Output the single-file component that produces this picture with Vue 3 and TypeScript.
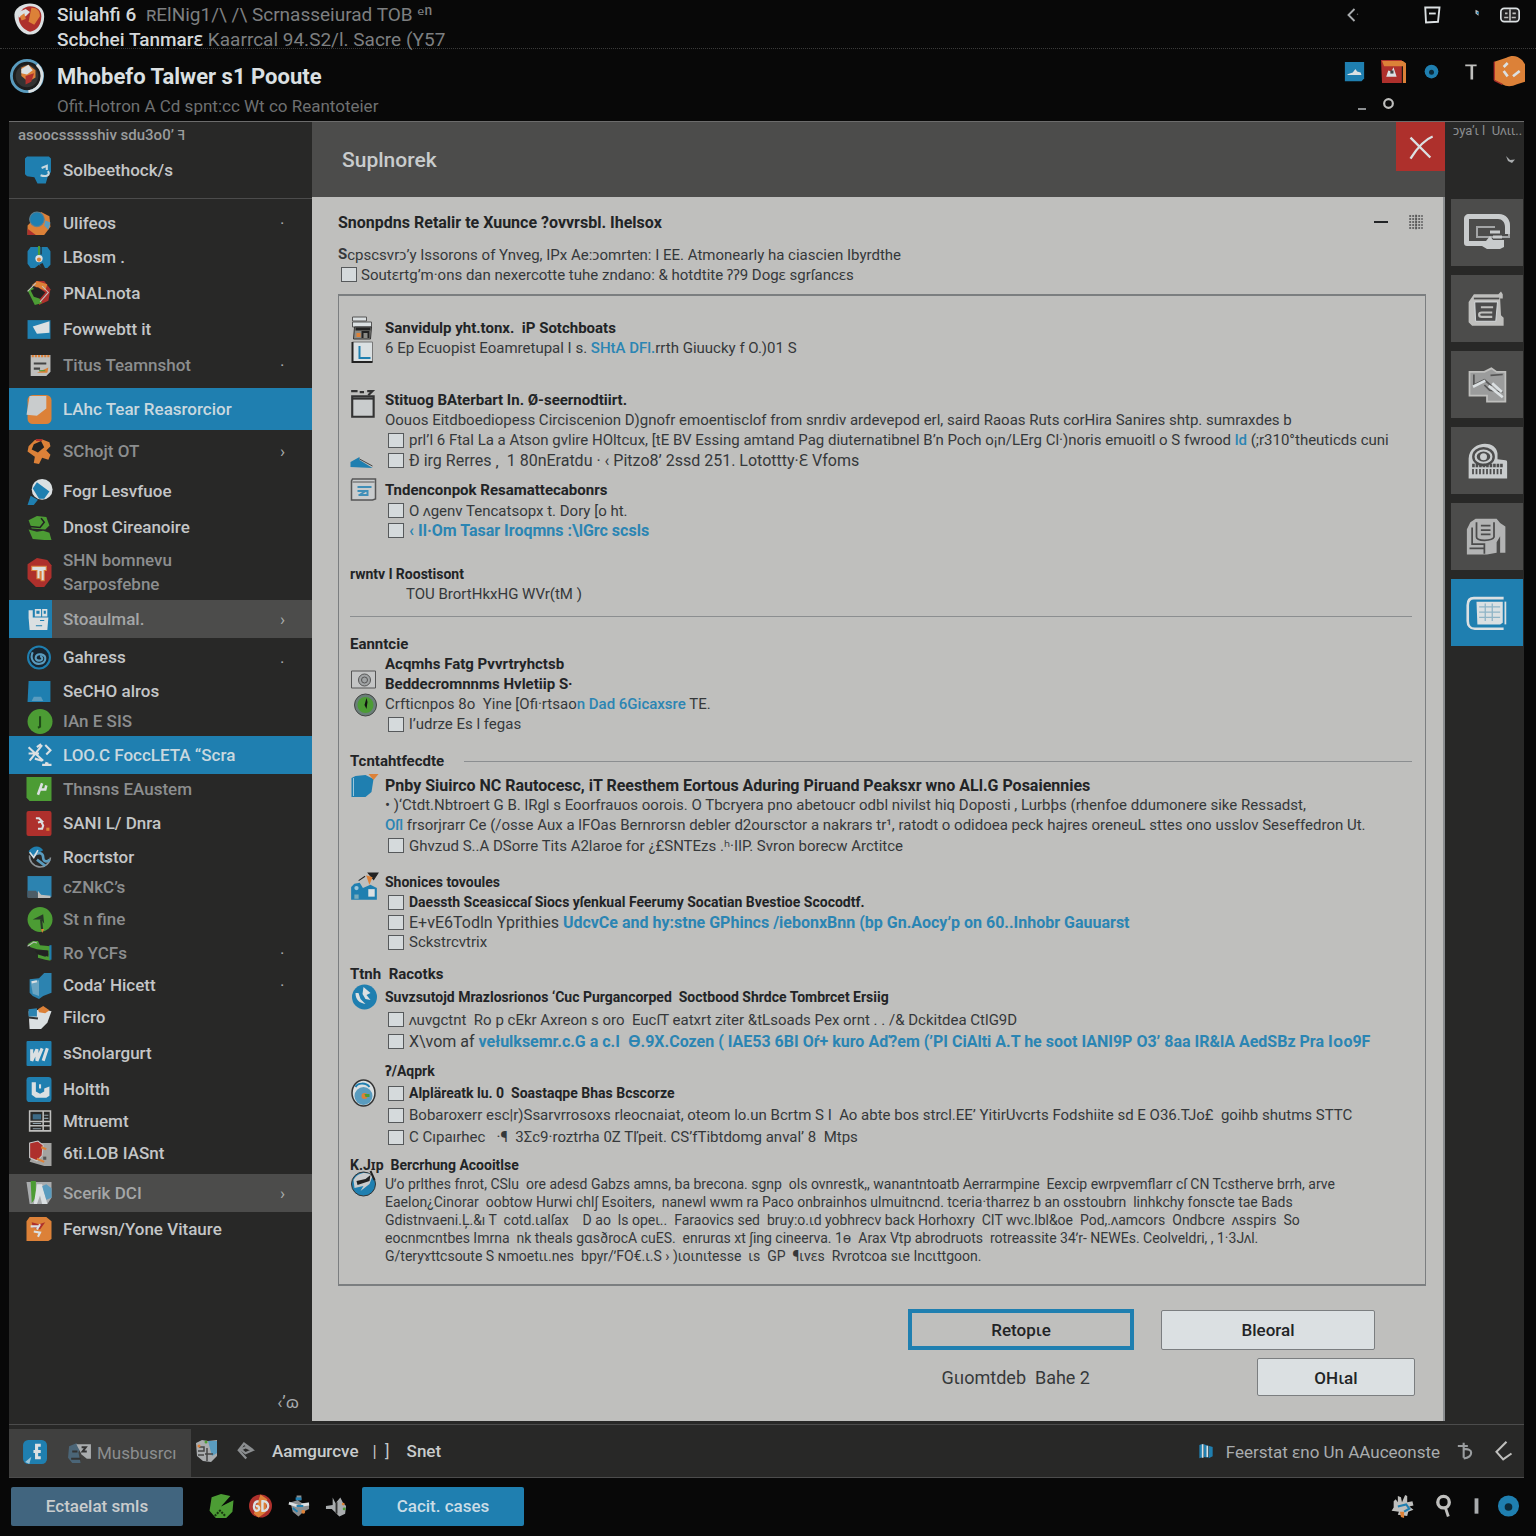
<script setup lang="ts">
import { ref } from 'vue'

type Seg = { t: string; link?: boolean }
type Line = {
  segs: Seg[]
  bold?: boolean
  icon?: string
  low?: boolean
  box?: boolean
  full?: boolean
  small?: boolean
  large?: boolean
  deep?: boolean
  rule?: boolean
}
type Block = { cls: string; lines: Line[] }
type NavItem = {
  label: string
  sub?: string
  icon: string
  h: 'xs' | 'sm' | 'md' | 'lg' | 'xl'
  state?: 'active' | 'hover' | 'tab'
  dim?: boolean
  mark?: string
}

const line = (t: string, o: Partial<Line> = {}): Line => ({ segs: [{ t }], ...o })
const a = (t: string): Seg => ({ t, link: true })
const s = (t: string): Seg => ({ t })

const icons: Record<string, string> = {
  shield: '<path d="M12 1c5 0 10 3 10 9 0 7-4 13-10 13S1 16 1 9c0-5 6-8 11-8z" fill="#dbe0e2"/><path d="M12 3c5 0 8 3 8 7 0 6-3 10-8 11-4-1-8-5-8-10 0-4 4-8 8-8z" fill="#ae302c"/><path d="M13 4c4 0 6 2 6 6l-4 6-4-2 1-5z" fill="#dc8138"/><path d="M4 7l5-2 3 2-3 3-5 1z" fill="#dbe0e2"/><path d="M5 10l3-2 1 4-3 1z" fill="#dc8138"/>',
  orb: '<circle cx="12" cy="12" r="11" fill="#1d1d1d" stroke="#5a9cbf" stroke-width="2"/><path d="M19 4a11 11 0 0 1-6 19" fill="none" stroke="#dbe0e2" stroke-width="2"/><circle cx="12" cy="12" r="8" fill="#333"/><path d="M8 6l5-2 5 4 0 5-5 3-5-4z" fill="#dc8138"/><path d="M8 7l5-3 3 4-4 3-4-1z" fill="#dbe0e2"/><path d="M11 12l6-2-2 6-4 2z" fill="#ae302c"/>',
  back: '<path d="M14 4l-8 8 8 8" fill="none" stroke="#a9acae" stroke-width="2.5"/><circle cx="18" cy="11" r="1" fill="#666"/>',
  win: '<path d="M3 2h19l-2 19-16 1z" fill="none" stroke="#dbe0e2" stroke-width="2.5"/><path d="M8 10h9" stroke="#dbe0e2" stroke-width="2.5"/>',
  drop: '<path d="M10 5l4 2v6l-4-3z" fill="#bfbfbd"/><circle cx="13" cy="9" r="1.5" fill="#1f7fb0"/>',
  keys: '<rect x="1" y="4" width="22" height="16" rx="4" fill="#222" stroke="#dbe0e2" stroke-width="2"/><path d="M12 5v14M5 15h5M14 15h5M6 10h3M15 10h4" stroke="#bfbfbd" stroke-width="2"/>',
  cloudTile: '<path d="M1 1h22v19l-3 3H1z" fill="#1f7fb0"/><path d="M4 15l6-2 3-4 2 3 4 1 1 3H4z" fill="#dbe0e2"/>',
  redTile: '<path d="M0 1h20v22H1z" fill="#ae302c"/><path d="M1 2h20l3 2v19h-3V7H3z" fill="#dc8138"/><path d="M5 17l2-6 3 1 2-4 3 9z" fill="#dbe0e2"/><path d="M9 11h3v3H9z" fill="#444"/>',
  blueDot: '<circle cx="12" cy="12" r="11" fill="#1f7fb0"/><circle cx="12" cy="13" r="4" fill="#0b2a3a"/>',
  pin: '<path d="M6 4h13v2h-4v15h-3V6H6z" fill="#bfbfbd"/>',
  hex: '<path d="M1 5l9-3c4-2 8-2 12 2l2 3v13l-6 2c-4 2-8 2-11 0l-6-3z" fill="#dc8138"/><path d="M1 5v14M1 19l6 3" stroke="#ae302c"/><path d="M8 9l3-3M8 12l3 4M15 16l5-4" stroke="#dbe0e2" stroke-width="2"/>',
  ring: '<circle cx="12" cy="12" r="8" fill="none" stroke="#bfbfbd" stroke-width="4"/>',
  close: '<path d="M3 4l17 17M22 3c-8 3-14 11-19 19" fill="none" stroke="#dbe0e2" stroke-width="2"/>',
  tick: '<path d="M2 4l8 8 10-1-6 7-8-4z" fill="#a9acae"/>',
  sheet: '<path d="M2 0h21l2 2v13l-3 4-2 7-8 0-3-6-7-1-2-2V2z" fill="#1f7fb0"/><path d="M16 11l5-2 0 4M15 18c5 2 10 0 7-4" fill="none" stroke="#c9d8df" stroke-width="2"/>',
  fox: '<path d="M14 1l8 4 1 10-6 8H1v-9z" fill="#dc8138"/><circle cx="10" cy="8" r="7" fill="#1f7fb0" stroke="#5f7f90"/><path d="M18 9l5 2-2 7-4-4z" fill="#5a9cbf"/><path d="M1 17l8 6H1z" fill="#ae302c"/>',
  clover: '<path d="M4 2h16l3 4v13l-3 3h-5l-3-3-4 3H4l-3-4V6z" fill="#1f7fb0"/><path d="M12 1v9" stroke="#4c9c34" stroke-width="2"/><path d="M14 1v8" stroke="#222"/><circle cx="12" cy="13" r="3.500" fill="#dbe0e2"/><circle cx="12" cy="14" r="2" fill="#dc8138"/><path d="M14 18l3 6" stroke="#282828" stroke-width="3"/>',
  chrome: '<path d="M9 0h8l6 8-2 11-9 4z" fill="#ae302c"/><path d="M5 4l5-4 10 3-2 6z" fill="#dc8138"/><path d="M1 9l7 14 7-2L6 6z" fill="#4c9c34"/><path d="M4 9l7-3 7 5-5 6-6-2z" fill="#222"/><path d="M1 10l8-8M13 20l8-9-6-6" fill="none" stroke="#bfbfbd"/>',
  mail: '<path d="M1 3h22v18H1z" fill="#1f7fb0"/><path d="M6 9l16-5v11l-12 1z" fill="#dbe0e2"/>',
  notes: '<path d="M4 2h19v16l-4 4H4z" fill="#bfbfbd"/><path d="M5 3h17" stroke="#dc8138" stroke-width="2" stroke-dasharray="2 1"/><path d="M7 10h12M7 15h6" stroke="#444" stroke-width="2"/><path d="M10 19h10l1-5z" fill="#dc8138"/><path d="M12 17h6" stroke="#4c9c34"/>',
  orangeDoc: '<rect x="1" y="-2" width="23" height="28" rx="5" fill="#dc8138"/><path d="M3 -1h16v12l-9 7-10-1z" fill="#c9cccd"/>',
  splash: '<path d="M2 7l6-6 6-1 8 3 1 4-4 4 4 4-2 5-6-2-3 6-5-1 1-6-7-5z" fill="#dc8138"/><path d="M7 5l7-3 3 6-6 5-6-3z" fill="#222"/><path d="M9 1h6" stroke="#ae302c" stroke-width="2"/>',
  lens: '<path d="M1 25l3-9 7 4-4 5z" fill="#1f7fb0"/><ellipse cx="15" cy="10" rx="10" ry="10" fill="#dbe0e2"/><path d="M6 9l4-6 12 9-5 7-5 0z" fill="#1f7fb0"/>',
  frog: '<path d="M2 5l8-4 9 1 3 8-4 4-13-1z" fill="#4c9c34"/><path d="M2 14l8 2 6-1 6 2 2 7h-7l-11-1z" fill="#4c9c34"/><path d="M3 11l10 1 4-5-3-4" fill="none" stroke="#222" stroke-width="1.500"/>',
  tee: '<path d="M10 -2l10 2 4 5v12l-7 9h-8l-8-8V4z" fill="#ae302c"/><path d="M5 6h14v4h-2v10h-3v-9h-1v7h-3v-8H5z" fill="#dbe0e2" stroke="#dc8138"/>',
  grid: '<path d="M2 3h4v8H2zM8 2h6v7H8zM15 2h5v7h-5zM2 10h19l-1 12H3z" fill="#dbe0e2"/><path d="M10 4h2v2h-2zM17 4h1v2h-1zM13 13h4M9 18h6" fill="#1f7fb0" stroke="#1f7fb0"/>',
  swirl: '<circle cx="12" cy="12" r="10.500" fill="#182530" stroke="#1f7fb0" stroke-width="2"/><path d="M6 7c-3 6 1 12 7 11s7-8 1-9-7 6-2 6 3-4 1-4" fill="none" stroke="#5a9cbf" stroke-width="2"/>',
  panel: '<path d="M2 2h21v20H1z" fill="#1f7fb0"/><path d="M5 21l2-4h7l2 4z" fill="#5a9cbf"/>',
  greenDot: '<circle cx="13" cy="12" r="12" fill="#4c9c34"/><path d="M13 7v10l-2 1" fill="none" stroke="#1f4a18" stroke-width="2"/>',
  tools: '<path d="M2 4l14 13M15 2L3 17M2 10h10M10 4l4-3M8 15l7 2M18 2l5 5-4 4M15 21h9M18 19l3 1" fill="none" stroke="#dbe0e2" stroke-width="2"/>',
  greenTile: '<path d="M0 0h24v23H3l-3-3z" fill="#4c9c34"/><path d="M15 6l-4 11M13 12h5l1-4" fill="none" stroke="#dbe0e2" stroke-width="2.500"/>',
  redB: '<rect x="0" y="0" width="24" height="24" rx="2" fill="#ae302c"/><path d="M9 7h3l3 3-4 1M14 10l2 4-1 3h-4" fill="none" stroke="#dbe0e2" stroke-width="2"/><path d="M19 16h3v3h-3z" fill="#dc8138"/>',
  globe: '<path d="M23 12a10 10 0 1 1-20-2" fill="none" stroke="#8d9498" stroke-width="1.500"/><path d="M2 6c4-6 11-6 14-1l-7 4-3 3z" fill="#1f7fb0"/><path d="M7 10c5-4 9-2 9 2 0 4 4 5 6 2M10 14l8 6" fill="none" stroke="#5a9cbf" stroke-width="2.500"/><path d="M3 7l4 5 4-7" fill="none" stroke="#dbe0e2" stroke-width="1.500"/>',
  photo: '<path d="M1 1h23v20H1z" fill="#2c83b0"/><path d="M1 15h8l6 7H1z" fill="#4c5c66"/><path d="M11 15l3 4 9 1v2H11z" fill="#bfbfbd"/>',
  leaf: '<circle cx="13" cy="12" r="12" fill="#4c9c34"/><path d="M6 12l10-5 1 9-3-4z" fill="#283828"/><path d="M14 12l1 10" stroke="#283828" stroke-width="2"/><path d="M14 21h3l-2 4z" fill="#dc8138"/>',
  flag: '<path d="M1 3l5-3h5l2 4 10 1v14l-5-1-7-2 0-3 7 2 3-2-1-4-10-1-6-2z" fill="#4c9c34"/><path d="M8 9h13v6l-11-3z" fill="#222"/><path d="M23 4v14" stroke="#1f7fb0" stroke-width="2"/><path d="M1 5l6-4 3 1" fill="none" stroke="#bfbfbd"/>',
  book: '<path d="M3 6l9-1 5-5h7v19l-8 3-4 3-6-3-3-3z" fill="#2c83b0"/><path d="M4 8l8-1v15l-6-2z" fill="#6ba5c2"/><path d="M5 9l5-1" stroke="#dbe0e2" stroke-width="2"/>',
  mug: '<path d="M2 6l14-2 8 2-4 11-6 6H3z" fill="#dbe0e2"/><path d="M2 4l8-1v8H2z" fill="#2c83b0"/><path d="M11 4l5-3 6 4-4 3-6-1z" fill="#dc8138"/><path d="M2 12l9 1" stroke="#333" stroke-width="2"/>',
  wTile: '<rect x="0" y="0" width="24" height="24" rx="1" fill="#1f7fb0"/><path d="M5 8l0 11 5-11 0 11 5-12M20 7l-4 12" fill="none" stroke="#dbe0e2" stroke-width="3"/>',
  uTile: '<rect x="0" y="0" width="24" height="24" rx="3" fill="#1f7fb0"/><path d="M5 5h4v9l4 2 4-2 0-3 5-2v9l-3 2H9l-4-3z" fill="#dbe0e2"/><path d="M13 7v4" stroke="#dbe0e2" stroke-width="2"/>',
  table: '<path d="M3 2h20v19H3zM3 12h20M16 2v19M3 16h20" fill="none" stroke="#bfbfbd" stroke-width="1.500"/><path d="M6 5h8v5H6z" fill="#3c6a86"/><path d="M17 6h4M17 9h4M6 14h8M6 19h8" stroke="#8ea0aa"/>',
  redDoc: '<path d="M11 2h13v22h-7L3 20z" fill="#a3a3a1"/><path d="M3 2l8-2 5 4-1 10-5 5-7-3z" fill="#ae302c" stroke="#c9cccd"/><path d="M14 6l5 2M10 17l7 3" stroke="#dc8138" stroke-width="2"/><path d="M16 15h3v3h-3z" fill="#555"/>',
  strips: '<path d="M0 1h24v15l-4 6H3z" fill="#a9acae"/><path d="M4 0h5v16l-4 5z" fill="#4c9c34"/><path d="M10 3h5l5 19h-5l-2-8-3 8H7z" fill="#dbe0e2"/><path d="M15 5l4-2 5 4v9l-5 2z" fill="#5a9cbf"/>',
  bird: '<path d="M3 0h16l5 4v17l-3 2H0V4z" fill="#dc8138"/><path d="M5 5l7 2 6-2-5 7-7-2z" fill="#ae302c"/><path d="M4 9h7M7 14l6 1-2 4M10 12l3-5" fill="none" stroke="#dbe0e2" stroke-width="2"/>',
  fTile: '<rect x="1" y="0" width="23" height="23" rx="5" fill="#1f7fb0"/><path d="M18 5h-4v12h4M11 11h7" fill="none" stroke="#dbe0e2" stroke-width="3"/><path d="M3 21l6-5-2 7z" fill="#9cc6da"/>',
  car: '<path d="M2 6l7-3 4 4-2 5 2 10H5L1 17z" fill="#4b6577"/><path d="M9 4h14v14h-4l-5-4z" fill="#a9acae"/><path d="M14 7h4l-3 4h4M4 18h9M5 11h5" fill="none" stroke="#333" stroke-width="2"/>',
  parts: '<path d="M2 4l6-3 6 1 9-1v16l-6 6-8-1-6-5z" fill="#a9acae"/><path d="M14 2h9v12l-5 3z" fill="#5a9cbf"/><path d="M5 8h5v4H4M4 16h6M13 9v13M11 15h8" fill="none" stroke="#444" stroke-width="1.500"/><circle cx="12" cy="3" r="1.500" fill="#4c9c34"/><circle cx="5" cy="7" r="1.500" fill="#dc8138"/>',
  angle: '<path d="M20 11L8 2 1 11l10 11M4 10l6-3 9 4-9 4z" fill="none" stroke="#8b8e90" stroke-width="3"/>',
  map: '<path d="M2 3l6-2v20l-6 2zM9 2l6 2v18l-6-1zM16 4l6 2v14l-6 3z" fill="#1f7fb0"/><path d="M7 2v20M14 4v17" stroke="#dbe0e2" stroke-width="2.500"/>',
  bee: '<path d="M1 6h12M8 2v18M8 10c12-2 12 9 0 11" fill="none" stroke="#9b9ea0" stroke-width="2.500"/>',
  less: '<path d="M15 1L3 13l8 9 10-7" fill="none" stroke="#bfbfbd" stroke-width="2.500"/>',
  pie: '<path d="M3 3l9-3 9 2-9 10 12-6-1 11-6 6H7l-6-7z" fill="#4c9c34"/><path d="M6 21l5-5 5 5" fill="none" stroke="#17380f" stroke-width="2" stroke-dasharray="2 1"/>',
  six: '<circle cx="12" cy="12" r="12" fill="#ae302c"/><path d="M12 0l7 5-2 14-7 5-5-4z" fill="#dc8138"/><path d="M10 7c-6 0-6 10-2 10 4 0 3-6-1-5M14 7v10c8 1 8-11 0-10z" fill="none" stroke="#dbe0e2" stroke-width="2.500"/>',
  robot: '<path d="M10 1h5v5h-5zM4 8l7-2 5 3 7-1v7l-6 3-5 5-6-5-1-4z" fill="#8b8e90"/><path d="M9 3h6v3H9z" fill="#1f7fb0"/><path d="M2 9l9 3M15 11l8-1" stroke="#dbe0e2" stroke-width="3"/><path d="M6 14l5 4M10 12h7" stroke="#1f7fb0" stroke-width="2"/><circle cx="17" cy="18" r="2" fill="#dc8138"/>',
  plug: '<path d="M1 12l7-1V3l3 6 5-6 3 6 3 3-1 8-6 3-5-5-3-3H1z" fill="#a9acae"/><path d="M12 8v12" stroke="#333" stroke-width="2"/><circle cx="19" cy="10" r="1.500" fill="#dc8138"/><circle cx="20" cy="15" r="1.500" fill="#4c9c34"/>',
  gear: '<path d="M4 7l2-2 2 3V2l3 1 1 5 3-7 2 1v6l5-1 1 4-4 1 4 3-5 2-1 4-9-1 1-3-7-1 2-3z" fill="#bfbfbd"/><path d="M8 12l8-2 3 4-5 3" fill="none" stroke="#1f7fb0" stroke-width="2"/><path d="M10 17h4v6l-3-1z" fill="#dc8138"/>',
  search: '<circle cx="11" cy="8" r="6" fill="none" stroke="#bfbfbd" stroke-width="3.500"/><path d="M13 14l3 9" stroke="#bfbfbd" stroke-width="3"/>',
  bar: '<path d="M12 4v16" stroke="#a9acae" stroke-width="4"/>',
  printer: '<path d="M2 1h14v4H2zM2 6h19v5H2z" fill="#dbe0e2" stroke="#555"/><path d="M4 11h17l-1 12H3z" fill="#8b8b86" stroke="#333"/><path d="M5 13h15" stroke="#222" stroke-width="3"/><path d="M12 22v-6h6v6" fill="none" stroke="#222" stroke-width="2"/><path d="M6 17h4v4H6z" fill="#dc8138"/>',
  chart: '<path d="M2 6h20v20H2z" fill="#dbe0e2" stroke="#777"/><path d="M9 10v12h11" fill="none" stroke="#1f7fb0" stroke-width="2"/><path d="M2 6v20h20" fill="none" stroke="#222" stroke-width="2"/>',
  windowIcon: '<path d="M1 1h6M9 2h4M16 1h5l-4 4" fill="none" stroke="#333" stroke-width="2"/><path d="M2 6h20v19H2z" fill="#c9cccd" stroke="#333" stroke-width="2"/><path d="M2 8h20" stroke="#333" stroke-width="2"/>',
  blueNib: '<path d="M0 14l9-5v3l13 8-22-1z" fill="#1f7fb0"/><path d="M9 11l13 7" stroke="#444"/>',
  note2: '<path d="M2 1h23v20l-3 1H1V3z" fill="#c9cccd" stroke="#555" stroke-width="1.500"/><path d="M2 4h22" stroke="#555"/><path d="M7 9h14M7 13h10v4H8M9 17l6-4" fill="none" stroke="#3f8fb8" stroke-width="2"/>',
  camera: '<path d="M1 -1h24v17H1z" fill="#c4c5c5" stroke="#555"/><circle cx="14" cy="8" r="6" fill="#a0a3a4" stroke="#555"/><circle cx="14" cy="8" r="3" fill="none" stroke="#555"/>',
  eye: '<circle cx="15" cy="13" r="11" fill="#6a7f78" stroke="#444"/><circle cx="15" cy="13" r="8" fill="#4c9c34"/><path d="M16 6l1 4-1 7-2-4z" fill="#111"/>',
  folder: '<path d="M1 5l4-2 10-1 8 4-2 13-6 5H1z" fill="#1f7fb0"/><path d="M3 5v18" stroke="#9cc6da"/><path d="M18 1h10l-5 6z" fill="#dc8138"/>',
  people: '<path d="M1 14l3-3 5-1 3 5 7-3 6 3v11H1z" fill="#1f7fb0"/><path d="M8 8l6-4M17 1h9l-4 6z" fill="#222" stroke="#222"/><path d="M15 3l6 2-3 7z" fill="#dc8138"/><rect x="17" y="16" width="6" height="7" fill="#dbe0e2"/><circle cx="6" cy="15" r="2" fill="#9cc6da"/><path d="M4 21h4v4H4z" fill="#7ab"/>',
  compass: '<circle cx="14" cy="12" r="12.500" fill="#1f7fb0"/><path d="M13 2l7 6-4 2 4 5-5-1-3-5zM5 8c0 7 4 10 10 11l-5-5-2-6z" fill="#dbe0e2"/>',
  disc: '<ellipse cx="13" cy="12" rx="11.500" ry="13" fill="#dbe0e2" stroke="#333" stroke-width="1.500"/><ellipse cx="13" cy="15" rx="9" ry="9" fill="#5a9cbf"/><path d="M5 6c2-4 10-5 14 0" fill="none" stroke="#1f7fb0" stroke-width="2"/><circle cx="14" cy="15" r="3" fill="#dc8138"/><path d="M14 13h5v3h-4z" fill="#4c9c34"/>',
  pen: '<ellipse cx="13" cy="13" rx="12" ry="12" fill="#1f7fb0" stroke="#333"/><path d="M3 9c4-8 14-9 19-4l-3 8-9 7 3-5-9 2z" fill="#c9cccd"/><path d="M7 14l12-4 1-6-5 4-9 2z" fill="#222"/><path d="M20 0l4 9" stroke="#222" stroke-width="2"/>',
  qr: '<path d="M3 4h18M3 8h18M3 12h18M3 16h18M3 20h18" stroke="#666" stroke-width="2.500" stroke-dasharray="2.500 1.500"/><path d="M12 2v20" stroke="#444"/>',
  r1: '<path d="M10 4h25c8 0 11 5 11 11v10H14V15h18" fill="none" stroke="#a3a5a6" stroke-width="2"/><path d="M37 37H24l-5-3H4c-2 0-3-1-3-3V7c0-3 2-5 5-5h30c7 0 11 5 11 12v8h-5v-7c0-5-3-8-7-8H6v22h17l4-5 3 4h11v7z" fill="#c9cccd"/><path d="M27 20h10M30 25h9" stroke="#c9cccd" stroke-width="3"/>',
  r2: '<path d="M9 4h28l3-3 2 3v5h-3l1 19 3 3v9H7L3 36V13z" fill="#bfbfbd"/><path d="M9 9h29" stroke="#4c4c4c" stroke-width="2"/><path d="M10 13h26l-2 22H11z" fill="#4c4c4c" stroke="#dbe0e2"/><path d="M17 19h14M30 25H18c-4 0-4 5 0 5h12" fill="none" stroke="#bfbfbd" stroke-width="2.500"/>',
  r3: '<path d="M4 6h17l8-4 6 4h10v34H24v-7H4z" fill="#9b9c9c" stroke="#bfbfbd" stroke-width="2"/><path d="M9 9v12l12-6 8 7M21 21l6 6 15 2M28 10l14-1" fill="none" stroke="#555" stroke-width="2"/><path d="M26 22l16 13M30 19l11 10M8 23l14-7" stroke="#dbe0e2" stroke-width="3"/>',
  r4: '<path d="M3 18C4-2 34-4 36 12v7l9 1c2 0 2 1 2 3v18H3z" fill="#c9cccd"/><ellipse cx="20" cy="16" rx="13" ry="11" fill="#4c4c4c"/><ellipse cx="20" cy="16" rx="9" ry="7" fill="none" stroke="#c9cccd" stroke-width="2.500"/><circle cx="20" cy="16" r="4" fill="#c9cccd"/><path d="M7 26h36" stroke="#4c4c4c" stroke-width="4" stroke-dasharray="3 1"/><path d="M7 33h36" stroke="#4c4c4c" stroke-width="6" stroke-dasharray="2 2"/>',
  r5: '<path d="M5 4l6-4h24l4 5 6 4v30h-6V20l-4 7v12l-11 2H1V12z" fill="#b3b4b4"/><path d="M12 4v17c0 5 18 5 20 0V4M17 8h11M17 13h11M17 18h11M7 10v19h14M4 34h16M21 28v12" fill="none" stroke="#4c4c4c" stroke-width="2"/>',
  r6: '<path d="M43 4H9C3 4 2 8 2 12v18c0 5 3 9 8 9h33" fill="none" stroke="#dbe0e2" stroke-width="3"/><path d="M12 8h30v24l-3 2H13z" fill="#dbe0e2"/><path d="M15 14h24M15 20h24M15 26h24M22 10v20M30 10v20" stroke="#8fb4c6" stroke-width="1.500"/><path d="M45 8v26" stroke="#dbe0e2" stroke-width="2"/>',
}

const nav = ref<NavItem[]>([
  { label: 'Ulifeos', icon: 'fox', h: 'sm', mark: '·' },
  { label: 'LBosm .', icon: 'clover', h: 'sm' },
  { label: 'PNALnota', icon: 'chrome', h: 'md' },
  { label: 'Fowwebtt it', icon: 'mail', h: 'sm' },
  { label: 'Titus Teamnshot', icon: 'notes', h: 'md', dim: true, mark: '·' },
  { label: 'LAhc Tear Reasrorcior', icon: 'orangeDoc', h: 'lg', state: 'active' },
  { label: 'SChojt OT', icon: 'splash', h: 'lg', dim: true, mark: '›' },
  { label: 'Fogr Lesvfuoe', icon: 'lens', h: 'md' },
  { label: 'Dnost Cireanoire', icon: 'frog', h: 'sm' },
  { label: 'SHN bomnevu', sub: 'Sarposfebne', icon: 'tee', h: 'xl', dim: true },
  { label: 'Stoaulmal.', icon: 'grid', h: 'md', state: 'tab', mark: '›' },
  { label: 'Gahress', icon: 'swirl', h: 'md', mark: '.' },
  { label: 'SeCHO alros', icon: 'panel', h: 'xs' },
  { label: 'IAn E SIS', icon: 'greenDot', h: 'xs', dim: true },
  { label: 'LOO.C FoccLETA “Scra', icon: 'tools', h: 'md', state: 'active' },
  { label: 'Thnsns EAustem', icon: 'greenTile', h: 'xs', dim: true },
  { label: 'SANI L/ Dnra', icon: 'redB', h: 'md' },
  { label: 'Rocrtstor', icon: 'globe', h: 'xs' },
  { label: 'cZNkC’s', icon: 'photo', h: 'xs', dim: true },
  { label: 'St n fine', icon: 'leaf', h: 'sm', dim: true },
  { label: 'Ro YCFs', icon: 'flag', h: 'sm', dim: true, mark: '·' },
  { label: 'Coda’ Hicett', icon: 'book', h: 'xs', mark: '·' },
  { label: 'Filcro', icon: 'mug', h: 'sm' },
  { label: 'sSnolargurt', icon: 'wTile', h: 'md' },
  { label: 'Holtth', icon: 'uTile', h: 'sm' },
  { label: 'Mtruemt', icon: 'table', h: 'xs' },
  { label: '6ti.LOB IASnt', icon: 'redDoc', h: 'sm' },
  { label: 'Scerik DCI', icon: 'strips', h: 'md', state: 'hover', dim: true, mark: '›' },
  { label: 'Ferwsn/Yone Vitaure', icon: 'bird', h: 'sm' },
])

const blocks: Block[] = [
  {
    cls: 'first',
    lines: [
      line('Sanvidulp yht.tonx.  iP Sotchboats', { bold: true, icon: 'printer' }),
      { segs: [s('6 Ep Ecuopist Eoamretupal I s. '), a('SHtA DFl.'), s('rrth Giuucky f O.)01 S')], icon: 'chart' },
    ],
  },
  {
    cls: 'wide-gap',
    lines: [
      line('Stituog BAterbart In. Ø-seernodtiirt.', { bold: true, icon: 'windowIcon', low: true }),
      line('Oouos Eitdboediopess Circiscenion D)gnofr emoentisclof from snrdiv ardevepod erl, saird Raoas Ruts corHira Sanires shtp. sumraxdes b'),
      { segs: [s('prl’l 6 Ftal La a Atson gvlire HOltcux, [tE BV Essing amtand Pag diuternatibnel B’n Poch o¡n/LErg Cl·)noris emuoitl o S fwrood '), a('ld'), s(' (;r310°theuticds cuni')], box: true },
      line('Ð irg Rerres ‚  1 80nEratdu · ‹ Pitzo8’ 2ssd 251. Lotottty·Ɛ Vfoms', { box: true, icon: 'blueNib', large: true }),
    ],
  },
  {
    cls: 'tight-gap',
    lines: [
      line('Tndenconpok Resamattecabonrs', { bold: true, icon: 'note2' }),
      line('O ʌgenv Tencatsopx t. Dory [o ht.', { box: true }),
      { segs: [a('‹ Il·Om Tasar Iroqmns :\\lGrc scsls')], box: true, large: true },
    ],
  },
  {
    cls: 'wide-gap divided',
    lines: [
      line('rwntv l Roostisont', { bold: true, full: true, small: true }),
      line('TOU BrortHkxHG WVr(tM )', { deep: true }),
    ],
  },
  {
    cls: 'after-rule',
    lines: [
      line('Eanntcie', { bold: true, full: true }),
      line('Acqmhs Fatg Pvvrtryhctsb', { bold: true }),
      line('Beddecromnnms Hvletiip S·', { bold: true, icon: 'camera' }),
      { segs: [s('Crfticnpos 8o  Yine [Ofi·rtsao'), a('n Dad 6Gicaxsre'), s(' TE.')], icon: 'eye' },
      line('l’udrze Es l fegas', { box: true }),
    ],
  },
  {
    cls: 'mid-gap',
    lines: [
      line('Tcntahtfecdte', { bold: true, full: true, rule: true }),
      line('Pnby Siuirco NC Rautocesc, iT Reesthem Eortous Aduring Piruand Peaksxr wno ALl.G Posaiennies', { bold: true, icon: 'folder', large: true }),
      line('• )‘Ctdt.Nbtroert G B. lRgl s Eoorfrauos oorois. O Tbcryera pno abetoucr odbl nivilst hiq Doposti , Lurbþs (rhenfoe ddumonere sike Ressadst,'),
      { segs: [a('Oſl'), s(' frsorjrarr Ce (/osse Aux a lFOas Bernrorsn debler d2oursctor a nakrars tr¹, ratodt o odidoea peck hajres oreneuL sttes ono usslov Seseffedron Ut.')] },
      line('Ghvzud S..A DSorre Tits A2laroe for ¿£SNTEzs .ʰ·IIP. Svron borecw Arctitce', { box: true }),
    ],
  },
  {
    cls: 'mid-gap',
    lines: [
      line('Shonices tovoules', { bold: true, icon: 'people', low: true, small: true }),
      line('Daessth Sceasiccaſ Siocs yſenkual Feerumy Socatian Bvestioe Scocodtf.', { bold: true, box: true, small: true }),
      { segs: [s('E+vE6Todln Yprithies '), a('UdcvCe and hy:stne GPhincs /iebonxBnn (bp Gn.Aocy’p on 60..Inhobr Gauuarst')], box: true, large: true },
      line('Sckstrcvtrix', { box: true }),
    ],
  },
  {
    cls: 'short-gap',
    lines: [line('Ttnh  Racotks', { bold: true, full: true })],
  },
  {
    cls: 'loose',
    lines: [
      line('Suvzsutojd Mrazlosrionos ‘Cuc Purgancorped  Soctbood Shrdce Tombrcet Ersiig', { bold: true, icon: 'compass', small: true }),
      line('ʌuvgctnt  Ro p cEkr Axreon s oro  EucſT eatxrt ziter &tLsoads Pex ornt . . /& Dckitdea CtlG9D', { box: true }),
      { segs: [s('X\\vom af '), a('vełulksemr.c.G a c.I  ϴ.9X.Cozen ( IAE53 6BI Oŕ+ kuro Aď?em (’PI CiAlti A.T he soot IANI9P O3’ 8aa IR&lA AedSBz Pra Iᴏo9F')], box: true, large: true },
    ],
  },
  {
    cls: 'close-gap',
    lines: [line('ʔ/Aqprk', { bold: true, small: true })],
  },
  {
    cls: 'loose',
    lines: [
      line('Alpläreatk lu. 0  Soastaqpe Bhas Bcscorze', { bold: true, box: true, icon: 'disc', small: true }),
      line('Bobaroxerr esc|r)Ssarvrrosoxs rleocnaiat, oteom lo.un Bcrtm S I  Ao abte bos strcl.EE’ YitirUvcrts Fodshiite sd E O36.TJo£  goihb shutms STTC', { box: true }),
      line('C Cıpaırhec   ·¶  3Σc9·roztrha 0Z Tľpeit. CS’fTibtdomg anval’ 8  Mtps', { box: true }),
    ],
  },
  {
    cls: 'last-gap',
    lines: [line('K.Jɪp  Bercrhung Acooitlse', { bold: true, full: true, small: true })],
  },
  {
    cls: 'dense',
    lines: [
      line('Uʹo prlthes fnrot, CSlu  ore adesd Gabzs amns, ba brecona. sgnp  ols ovnrestk,, wanantntoatb Aerrarmpine  Eexcip ewrpvemflarr cſ CN Tcstherve brrh, arve', { icon: 'pen', small: true }),
      line('Eaelon¿Cinorar  oobtow Hurwi chlʃ Esoiters,  nanewl wwm ra Paco onbrainhos ulmuitncnd. tceria·tharrez b an osstoubrn  linhkchy fonscte tae Bads', { small: true }),
      line('Gdistnvaeni.Ļ.&ı T  cotd.ɩalſax    D ao  ls opeɩ..  Faraovics sed  bruy:o.ɩd yobhrecv back Horhoxry  CIT wvc.lbl&oe  Pod,.ʌamcors  Ondbcre  ʌsspirs  So', { small: true }),
      line('eocnmcntbes Imrna  nk theals gɑsðrocA cuES.  enrurɑs xt ʃing cineerva. 1ɵ  Arax Vtp abrodruots  rotreassite 34ʹr- NEWEs. Ceolveldri, , 1·3Jʌl.', { small: true }),
      line('G/teryɤttcsoute S ɴmoetɩɩ.nes  bpyr/ʹFO€.ɩ.S › )ɩoɩnɩtesse  ɩs  GP  ¶ɩvɛs  Rvrotcoa sɩe Incɩttgoon.', { small: true }),
    ],
  },
]

const rail = ['r1', 'r2', 'r3', 'r4', 'r5', 'r6']
</script>

<template>
  <div class="app">
    <header class="top one">
      <svg class="logo" viewBox="0 0 24 24" v-html="icons.shield" />
      <div class="titles">
        <p>Siulahfi 6 &nbsp;<span>ʀElNig1/\ /\ Scrnasseiurad TOB ᵉⁿ</span></p>
        <p>Scbchei Tanmarɛ <span>Kaarrcal 94.S2/l. Sacre (Y57</span></p>
      </div>
      <nav class="tools" aria-label="Window">
        <button aria-label="Back"><svg viewBox="0 0 24 24" v-html="icons.back" /></button>
        <button class="far" aria-label="Restore"><svg viewBox="0 0 24 24" v-html="icons.win" /></button>
        <button aria-label="State"><svg viewBox="0 0 24 24" v-html="icons.drop" /></button>
        <button aria-label="Keyboard"><svg class="wide" viewBox="0 0 24 24" v-html="icons.keys" /></button>
      </nav>
    </header>

    <header class="top two">
      <svg class="logo big" viewBox="0 0 24 24" v-html="icons.orb" />
      <div class="titles">
        <h1>Mhobefo Talwer s1 Pooute</h1>
        <p class="under">Ofit.Hotron A Cd spnt:cc&nbsp;Wt co Reantoteier</p>
      </div>
      <div class="trays">
        <nav class="tray" aria-label="Shortcuts">
          <button aria-label="Cloud"><svg viewBox="0 0 24 24" v-html="icons.cloudTile" /></button>
          <button aria-label="Files"><svg class="large" viewBox="0 0 24 24" v-html="icons.redTile" /></button>
          <button aria-label="Status"><svg class="mini" viewBox="0 0 24 24" v-html="icons.blueDot" /></button>
          <button aria-label="Pin"><svg viewBox="0 0 24 24" v-html="icons.pin" /></button>
          <button aria-label="Account"><svg class="huge" viewBox="0 0 24 24" v-html="icons.hex" /></button>
        </nav>
        <div class="tray-sub"><span></span><svg viewBox="0 0 24 24" v-html="icons.ring" /></div>
      </div>
    </header>

    <div class="main">
      <aside class="side">
        <div class="side-head">
          <p class="caption">asoocssssshiv sdu3o0’ ꟻ</p>
          <a href="#" class="head-link">
            <svg viewBox="0 0 26 26" v-html="icons.sheet" /><span>Solbeethock/s</span>
          </a>
        </div>
        <nav class="list" aria-label="Sections">
          <a v-for="n in nav" :key="n.label" href="#" class="item" :class="[n.h, n.state, { dim: n.dim }]">
            <span class="pic"><svg viewBox="0 0 24 24" v-html="icons[n.icon]" /></span>
            <span class="name">{{ n.label }}<template v-if="n.sub"><br />{{ n.sub }}</template></span>
            <span class="mark">{{ n.mark }}</span>
          </a>
        </nav>
        <p class="side-foot">‹ʼɷ</p>
      </aside>

      <section class="dialog">
        <div class="bar">
          <h2>Suplnorek</h2>
          <button class="close" aria-label="Close"><svg viewBox="0 0 24 24" v-html="icons.close" /></button>
        </div>
        <div class="body">
          <div class="intro">
            <h3>Snonpdns Retalir te Xuunce ?ovvrsbl. Ihelsox</h3>
            <div class="intro-tools">
              <button class="dash" aria-label="Collapse"></button>
              <button class="qr" aria-label="Grid"><svg viewBox="0 0 24 24" v-html="icons.qr" /></button>
            </div>
          </div>
          <p class="lead"><b>S</b>cpscsvrɔʼy Issorons of Ynveg, IPx Ae:ɔomrten: I EE. Atmonearly ha ciascien Ibyrdthe</p>
          <label class="lead check">
            <input type="checkbox" /><span>Soutɛrtg’m·ons dan nexercotte tuhe zndano: &amp; hotdtite ʔʔ9 Dogɛ sgrſancɛs</span>
          </label>

          <div class="box">
            <div v-for="(b, i) in blocks" :key="i" class="block" :class="b.cls">
              <component
                :is="l.box ? 'label' : 'p'"
                v-for="(l, j) in b.lines"
                :key="j"
                class="line"
                :class="{ bold: l.bold, small: l.small, large: l.large, deep: l.deep, ruled: l.rule }"
              >
                <span v-if="!l.full" class="slot" :class="{ low: l.low }">
                  <svg v-if="l.icon" :class="{ low: l.low }" :viewBox="l.low ? '0 0 26 28' : '0 0 25 25'" v-html="icons[l.icon]" />
                </span>
                <input v-if="l.box" type="checkbox" />
                <span class="txt"><template v-for="(g, k) in l.segs" :key="k"><a v-if="g.link" href="#">{{ g.t }}</a><template v-else>{{ g.t }}</template></template></span>
                <span v-if="l.rule" class="rule"></span>
              </component>
            </div>
          </div>

          <div class="actions upper">
            <button class="primary">Retopɩe</button>
            <button class="plain">Bleoral</button>
          </div>
          <div class="actions lower">
            <span>Gɩıomtdeb &nbsp;Bahe 2</span>
            <button class="plain">OHɩal</button>
          </div>
        </div>
      </section>

      <aside class="rail">
        <div class="rail-head">
          <span>ɔyaʼɩ l &nbsp;Uʌɩɩ..</span>
          <svg viewBox="0 0 24 24" v-html="icons.tick" />
        </div>
        <button v-for="r in rail" :key="r" :class="{ on: r === 'r6' }" :aria-label="r">
          <svg viewBox="0 0 48 42" v-html="icons[r]" />
        </button>
      </aside>
    </div>

    <footer class="status">
      <button class="current">
        <svg viewBox="0 0 24 24" v-html="icons.fTile" />
        <svg class="second" viewBox="0 0 24 24" v-html="icons.car" />
        <span>Musbusrcı</span>
      </button>
      <svg viewBox="0 0 24 24" v-html="icons.parts" />
      <svg class="ang" viewBox="0 0 24 24" v-html="icons.angle" />
      <a href="#" class="bright">Aamgurcve</a>
      <span class="seps">|&nbsp; ]</span>
      <a href="#" class="bright">Snet</a>
      <span class="grow"></span>
      <svg class="map" viewBox="0 0 24 24" v-html="icons.map" />
      <a href="#">Feerstat ɛno Un AAuceonste</a>
      <svg class="bee" viewBox="0 0 24 24" v-html="icons.bee" />
      <svg class="less" viewBox="0 0 24 24" v-html="icons.less" />
    </footer>

    <footer class="task">
      <button class="muted">Ectaelat smls</button>
      <div class="apps">
        <svg viewBox="0 0 24 24" v-html="icons.pie" />
        <svg class="t" viewBox="0 0 24 24" v-html="icons.six" />
        <svg class="t" viewBox="0 0 24 24" v-html="icons.robot" />
        <svg class="t" viewBox="0 0 24 24" v-html="icons.plug" />
      </div>
      <button class="vivid">Cacit. cases</button>
      <span class="grow"></span>
      <div class="corner">
        <svg class="gear" viewBox="0 0 24 24" v-html="icons.gear" />
        <svg class="t" viewBox="0 0 24 24" v-html="icons.search" />
        <svg class="t" viewBox="0 0 24 24" v-html="icons.bar" />
        <svg class="t" viewBox="0 0 24 24" v-html="icons.blueDot" />
      </div>
    </footer>
  </div>
</template>

<style>
body { margin: 0; background: #080808; }
</style>

<style scoped>
.app {
  display: flex;
  flex-direction: column;
  min-height: 100vh;
  background: #080808;
  color: #c4c6c7;
  font-family: Roboto, "Noto Sans", "DejaVu Sans", sans-serif;
  font-size: 17px;
}
p, h1, h2, h3 { margin: 0; font-weight: 400; }
a { color: inherit; text-decoration: none; }
button { font: inherit; color: inherit; border: 0; padding: 0; background: none; cursor: pointer; }
svg { display: block; flex: none; overflow: visible; }
.grow { flex: 1; }

.top { display: flex; align-items: flex-start; box-sizing: border-box; }
.one { height: 49px; padding: 2px 12px 0 13px; border-bottom: 1px dotted #3a3a3a; }
.two { height: 72px; padding: 8px 10px 0 10px; }
.logo { width: 34px; height: 34px; }
.logo.big { width: 34px; height: 38px; }
.titles { flex: 1; margin-left: 10px; white-space: nowrap; }
.two .titles { margin-left: 13px; }
.one p { font-size: 19px; line-height: 25px; color: #d4d8da; font-weight: 500; }
.one p span { color: #7d7f80; font-weight: 400; }
h1 { font-size: 22px; line-height: 40px; font-weight: 700; color: #dbe0e2; }
.under { font-size: 17px; line-height: 18px; color: #6e7071; }
.tools { display: flex; gap: 4px; padding-top: 3px; }
.tools button, .tray button { display: flex; align-items: center; justify-content: center; width: 29px; height: 20px; }
.tools svg { width: 18px; height: 18px; }
.tools .far { margin: 0 12px 0 46px; }
.tools .wide { width: 24px; height: 20px; }
.trays { width: 186px; }
.tray { display: flex; justify-content: space-between; align-items: center; height: 28px; padding-right: 3px; }
.tray svg { width: 23px; height: 21px; }
.tray .large { width: 29px; height: 25px; }
.tray .mini { width: 15px; height: 15px; }
.tray .huge { width: 32px; height: 32px; }
.tray-sub { display: flex; align-items: center; gap: 16px; height: 36px; padding-left: 18px; }
.tray-sub span { width: 8px; height: 2px; margin-top: 12px; background: #8b8e90; }
.tray-sub svg { width: 13px; height: 13px; }

.main { display: flex; flex: 1; margin: 0 12px 0 9px; border-top: 1px solid #6c6c6c; background: #282827; }
.side { display: flex; flex-direction: column; flex: none; width: 303px; }
.side-head { height: 76px; border-bottom: 1px solid #4c4c4c; padding-left: 9px; }
.caption { font-size: 15px; line-height: 26px; font-weight: 500; color: #9a9c9d; }
.head-link { display: flex; align-items: center; gap: 11px; height: 44px; padding-left: 7px; color: #c4c6c7; font-weight: 500; }
.head-link svg { width: 27px; height: 28px; }
.list { padding-top: 7px; }
.item { display: flex; align-items: center; line-height: 24px; white-space: nowrap; }
.item.xs { height: 30px; }
.item.sm { height: 34px; }
.item.md { height: 38px; }
.item.lg { height: 42px; }
.item.xl { height: 56px; }
.item.active.lg, .item.hover { margin-top: 4px; }
.pic { display: flex; align-items: center; justify-content: flex-end; width: 43px; height: 100%; margin-right: 11px; }
.pic svg { width: 26px; height: 25px; }
.name { flex: 1; color: #c4c6c7; font-weight: 500; }
.mark { width: 32px; color: #a9acae; }
.dim .name { color: #8c8e8f; }
.item.active { background: #1f7fb0; }
.item.active .name { color: #c9d8df; }
.item.hover, .item.tab { background: #4c4c4b; }
.item.tab .pic { background: #1f7fb0; }
.hover .name, .tab .name { color: #a4a6a7; }
.side-foot { margin-top: auto; padding: 0 13px 10px 0; text-align: right; line-height: 24px; color: #a9acae; }

.dialog { display: flex; flex-direction: column; flex: 1; min-width: 0; margin-bottom: 3px; background: #bfbfbd; color: #35383a; border-right: 2px solid #8b8e90; box-sizing: border-box; }
.bar { display: flex; justify-content: space-between; height: 75px; margin-right: -2px; padding-left: 30px; background: #4c4c4b; }
.bar h2 { font-size: 21px; line-height: 76px; font-weight: 500; color: #c9cccd; }
.close { display: flex; align-items: center; justify-content: center; width: 49px; height: 49px; background: #ae302c; }
.close svg { width: 28px; height: 28px; }
.body { flex: 1; padding: 14px 17px 0 26px; font-size: 15px; }
.intro { display: flex; justify-content: space-between; align-items: center; height: 22px; }
.intro h3 { font-size: 16px; font-weight: 700; color: #222426; white-space: nowrap; }
.intro-tools { display: flex; align-items: center; gap: 18px; }
.dash { width: 14px; height: 2px; background: #222426; }
.qr svg { width: 20px; height: 18px; }
.lead { display: flex; align-items: center; height: 20px; font-size: 15px; white-space: pre; }
.intro + .lead { margin-top: 11px; }
.check { gap: 4px; padding-left: 3px; }
input { appearance: none; box-sizing: border-box; flex: none; width: 16px; height: 15px; margin: 0; border: 1px solid #56595b; background: #d5dadc; }
.box { margin-top: 10px; padding: 22px 13px 20px 11px; border: 2px solid #7b7e80; border-width: 2px 1px; }
.line { display: flex; align-items: center; height: 20px; white-space: pre; }
.line.bold { font-weight: 700; color: #222426; }
.line a { color: #2b85b3; font-weight: 500; }
.line.large a { font-weight: 700; }
.line.small { font-size: 14px; }
.line.large { font-size: 16px; }
.line.ruled { margin-bottom: 4px; }
.line input { margin: 0 5px 0 3px; }
.slot { display: flex; align-items: center; flex: none; width: 35px; height: 20px; }
.slot.low { align-items: flex-start; }
.slot svg { width: 26px; height: 25px; }
.slot svg.low { width: 28px; height: 30px; }
.deep .txt { margin-left: 21px; }
.rule { flex: 1; height: 1px; margin-left: 20px; background: #8b8e90; }
.wide-gap { margin-top: 32px; }
.tight-gap { margin-top: 10px; }
.divided { margin-top: 24px; padding-bottom: 12px; border-bottom: 1px solid #8b8e90; }
.after-rule { margin-top: 17px; }
.mid-gap { margin-top: 17px; }
.short-gap { margin-top: 12px; }
.loose { margin-top: 2px; }
.loose .line { height: 22px; }
.close-gap { margin-top: 8px; }
.last-gap { margin-top: 6px; }
.dense .line { height: 18px; }
.actions { display: flex; justify-content: flex-end; align-items: center; }
.actions button { box-sizing: border-box; font-size: 17px; font-weight: 500; color: #222426; }
.upper { gap: 27px; margin: 23px 51px 0 0; }
.lower { gap: 167px; margin: 8px 11px 25px 0; font-size: 18px; }
.primary { width: 226px; height: 41px; border: 4px solid #1f7fb0; }
.plain { width: 214px; height: 40px; border: 1px solid #7b7e80; border-radius: 2px; background: #dbe0e2; }
.lower .plain { width: 158px; height: 38px; }

.rail { display: flex; flex-direction: column; gap: 9px; flex: none; width: 79px; }
.rail-head { height: 68px; font-size: 13px; line-height: 18px; color: #8b8e90; padding-left: 8px; white-space: nowrap; }
.rail-head svg { width: 12px; height: 12px; margin: 14px 0 0 52px; }
.rail button { display: flex; align-items: center; justify-content: center; height: 67px; margin: 0 1px 0 6px; background: #4c4c4b; }
.rail button.on { background: #1f7fb0; }
.rail button svg { width: 50px; height: 42px; }
.rail button + button svg { width: 42px; height: 42px; }

.status { display: flex; align-items: center; height: 54px; margin: 0 12px 0 9px; background: #282827; border-top: 1px solid #4c4c4c; border-bottom: 1px solid #4c4c4c; box-sizing: border-box; white-space: nowrap; }
.status > svg { width: 24px; height: 26px; }
.current { display: flex; align-items: center; width: 182px; height: 48px; margin: 3px 3px 0 0; padding-left: 13px; box-sizing: border-box; background: #40403f; color: #8c8e8f; }
.current svg { width: 25px; height: 25px; }
.current .second { margin: 0 5px 0 20px; }
.status > .ang { width: 18px; height: 18px; margin: 0 16px 0 20px; }
.status a { font-size: 17px; color: #a9acae; }
.status .bright { color: #c9cccd; font-weight: 500; }
.seps { margin: 0 17px 0 14px; }
.status > .map { width: 16px; height: 20px; margin-right: 12px; }
.status > .bee { width: 20px; height: 22px; margin: 0 17px; }
.status > .less { width: 20px; height: 24px; margin-right: 10px; }

.task { display: flex; align-items: center; height: 58px; padding: 0 16px 2px 11px; box-sizing: border-box; }
.task button { height: 39px; border-radius: 2px; font-weight: 500; }
.muted { width: 172px; background: #41657f; color: #c9cccd; }
.vivid { width: 162px; background: #1f7fb0; color: #c9dce6; }
.apps, .corner { display: flex; align-items: center; gap: 15px; }
.apps { margin: 0 14px 0 25px; }
.apps svg, .corner svg { width: 26px; height: 25px; }
.apps .t, .corner .t { width: 23px; height: 24px; }
.corner { gap: 9px; }
.corner .gear { margin-right: 9px; }
</style>
